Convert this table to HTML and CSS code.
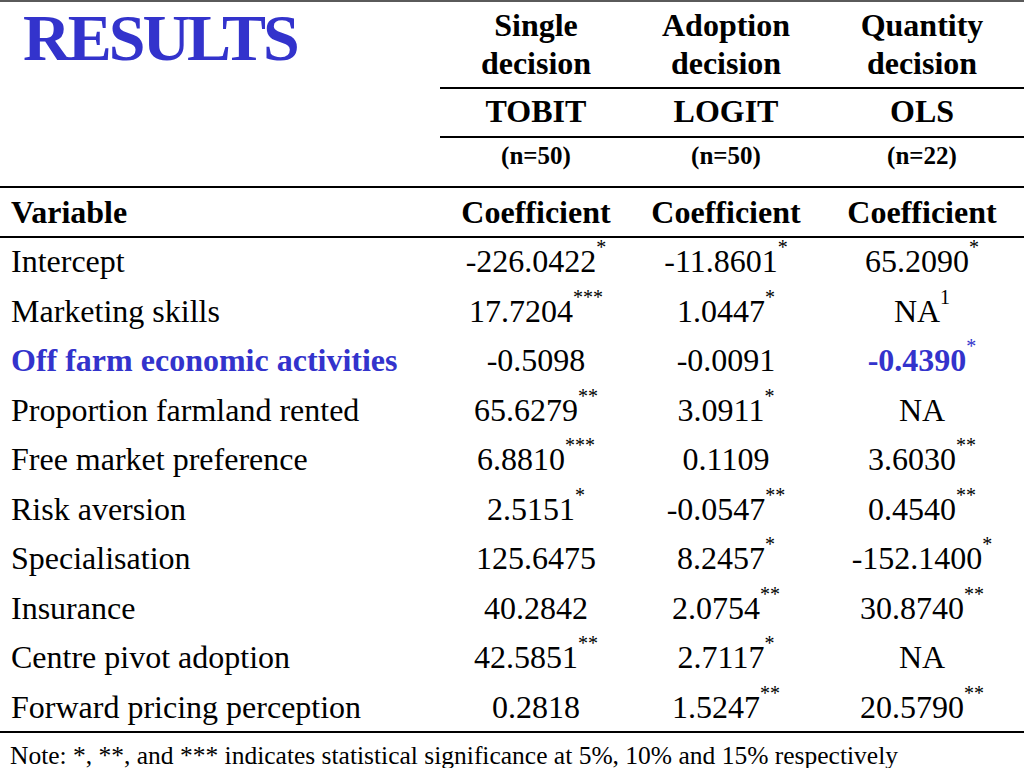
FILE: index.html
```html
<!DOCTYPE html>
<html lang="en">
<head>
<meta charset="utf-8">
<title>Results</title>
<link rel="stylesheet" href="styles.css">
</head>
<body>
<div class="slide">
  <div class="results">
    <div class="title">RESULTS</div>

    <div class="h1 col2">Single<br>decision</div>
    <div class="h1 col3">Adoption<br>decision</div>
    <div class="h1 col4">Quantity<br>decision</div>

    <div class="h2 col2">TOBIT</div>
    <div class="h2 col3">LOGIT</div>
    <div class="h2 col4">OLS</div>

    <div class="h3 col2">(n=50)</div>
    <div class="h3 col3">(n=50)</div>
    <div class="h3 col4">(n=22)</div>

    <div class="h4 left">Variable</div>
    <div class="h4">Coefficient</div>
    <div class="h4">Coefficient</div>
    <div class="h4">Coefficient</div>

    <div class="var">Intercept</div>
    <div class="num">-226.0422<sup class="s">*</sup></div>
    <div class="num">-11.8601<sup class="s">*</sup></div>
    <div class="num">65.2090<sup class="s">*</sup></div>

    <div class="var">Marketing skills</div>
    <div class="num">17.7204<sup class="s">***</sup></div>
    <div class="num">1.0447<sup class="s">*</sup></div>
    <div class="num">NA<sup class="s">1</sup></div>

    <div class="var hl">Off farm economic activities</div>
    <div class="num">-0.5098</div>
    <div class="num">-0.0091</div>
    <div class="num hl">-0.4390<sup class="s">*</sup></div>

    <div class="var">Proportion farmland rented</div>
    <div class="num">65.6279<sup class="s">**</sup></div>
    <div class="num">3.0911<sup class="s">*</sup></div>
    <div class="num">NA</div>

    <div class="var">Free market preference</div>
    <div class="num">6.8810<sup class="s">***</sup></div>
    <div class="num">0.1109</div>
    <div class="num">3.6030<sup class="s">**</sup></div>

    <div class="var">Risk aversion</div>
    <div class="num">2.5151<sup class="s">*</sup></div>
    <div class="num">-0.0547<sup class="s">**</sup></div>
    <div class="num">0.4540<sup class="s">**</sup></div>

    <div class="var">Specialisation</div>
    <div class="num">125.6475</div>
    <div class="num">8.2457<sup class="s">*</sup></div>
    <div class="num">-152.1400<sup class="s">*</sup></div>

    <div class="var">Insurance</div>
    <div class="num">40.2842</div>
    <div class="num">2.0754<sup class="s">**</sup></div>
    <div class="num">30.8740<sup class="s">**</sup></div>

    <div class="var">Centre pivot adoption</div>
    <div class="num">42.5851<sup class="s">**</sup></div>
    <div class="num">2.7117<sup class="s">*</sup></div>
    <div class="num">NA</div>

    <div class="var last">Forward pricing perception</div>
    <div class="num last">0.2818</div>
    <div class="num last">1.5247<sup class="s">**</sup></div>
    <div class="num last">20.5790<sup class="s">**</sup></div>
  </div>
  <p class="note">Note: *, **, and *** indicates statistical significance at 5%, 10% and 15% respectively</p>
</div>
</body>
</html>
```

FILE: styles.css
```css
* {
  box-sizing: border-box;
}

html, body {
  margin: 0;
  padding: 0;
  background: #ffffff;
}

body {
  font-family: "Liberation Serif", "Times New Roman", serif;
  color: #000000;
  width: 1024px;
  height: 768px;
  overflow: hidden;
}

.slide {
  width: 1024px;
  height: 768px;
  border-top: 2px solid #5a5a5a;
}

.results {
  display: grid;
  grid-template-columns: 440px 192px 188px 204px;
  grid-template-rows: 87px 49px 50px 50px repeat(10, 49.5px);
}

.title {
  grid-column: 1;
  grid-row: 1 / 4;
  font-size: 66px;
  font-weight: bold;
  line-height: 66px;
  letter-spacing: -3px;
  color: #3333cc;
  padding: 3px 0 0 23px;
  border-bottom: 2px solid #000;
}

.col2 { grid-column: 2; }
.col3 { grid-column: 3; }
.col4 { grid-column: 4; }

.h1, .h2, .h3, .h4 {
  font-weight: bold;
  text-align: center;
  border-bottom: 2px solid #000;
  white-space: nowrap;
}

.h1 {
  grid-row: 1;
  font-size: 32px;
  line-height: 38px;
  padding-top: 4px;
}

.h2 {
  grid-row: 2;
  font-size: 32px;
  line-height: 36px;
  padding-top: 4px;
}

.h3 {
  grid-row: 3;
  font-size: 25px;
  line-height: 30px;
  padding-top: 3px;
}

.h4 {
  font-size: 32px;
  line-height: 36px;
  padding-top: 6px;
}

.h4.left {
  text-align: left;
  padding-left: 11px;
}

.var, .num {
  font-size: 32px;
  line-height: 36px;
  padding-top: 5px;
  white-space: nowrap;
}

.var {
  padding-left: 11px;
}

.num {
  text-align: center;
}

.hl {
  color: #3333cc;
  font-weight: bold;
}

.s {
  font-size: 20px;
  line-height: 0;
  vertical-align: 18px;
  font-weight: normal;
}

.last {
  border-bottom: 2px solid #000;
}

.note {
  margin: 0;
  padding: 9px 0 0 10px;
  font-size: 25.5px;
  line-height: 28px;
  white-space: nowrap;
}
```
